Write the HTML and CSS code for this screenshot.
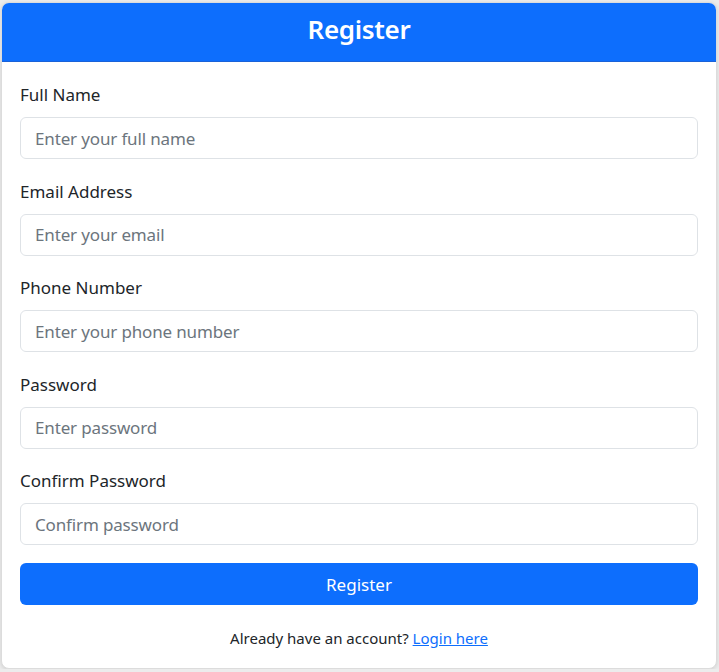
FILE: index.html
```html
<!DOCTYPE html>
<html lang="en">

<head>
    <meta charset="UTF-8">
    <meta name="viewport" content="width=device-width, initial-scale=1.0">
    <title>Register</title>
    <link rel="stylesheet" href="styles.css">
</head>

<body>

    <div class="card">
        <div class="card-header">
            <h2>Register</h2>
        </div>

        <div class="card-body">
            <form id="registerForm">
                <div class="field">
                    <label for="fullname">Full Name</label>
                    <input type="text" id="fullname" name="fullname" placeholder="Enter your full name">
                </div>

                <div class="field">
                    <label for="email">Email Address</label>
                    <input type="email" id="email" name="email" placeholder="Enter your email">
                </div>

                <div class="field">
                    <label for="phone">Phone Number</label>
                    <input type="tel" id="phone" name="phone" placeholder="Enter your phone number">
                </div>

                <div class="field">
                    <label for="password">Password</label>
                    <input type="password" id="password" name="password" placeholder="Enter password">
                </div>

                <div class="field">
                    <label for="confirm">Confirm Password</label>
                    <input type="password" id="confirm" name="confirm" placeholder="Confirm password">
                </div>

                <button type="submit" class="btn-register">Register</button>
            </form>

            <p class="login-link">Already have an account? <a href="#">Login here</a></p>
        </div>
    </div>

</body>

</html>
```

FILE: styles.css
```css
body {
    margin: 0;
    padding: 2px 2px 0 1px;
    font-family: 'Noto Sans', 'Open Sans', sans-serif;
    background-color: #ececec;
    color: #212529;
}

.card {
    background-color: #fff;
    border: 1px solid #dcdcdc;
    border-radius: 8px;
    box-shadow: 0 1px 4px rgba(0, 0, 0, 0.12);
    overflow: hidden;
}

.card-header {
    background-color: #0d6efd;
    color: #fff;
    height: 59px;
    padding-bottom: 7px;
    box-sizing: border-box;
    display: flex;
    align-items: center;
    justify-content: center;
    border-bottom: 1px solid #1a62d8;
}

.card-header h2 {
    margin: 0;
    font-size: 26px;
    font-weight: 600;
    letter-spacing: -0.3px;
}

.card-body {
    padding: 20px 18px 17px;
}

.field {
    margin-bottom: 19.5px;
}

.field label {
    display: block;
    font-size: 17px;
    line-height: 26px;
    margin-bottom: 9px;
}

.field input {
    display: block;
    box-sizing: border-box;
    width: 100%;
    height: 42px;
    padding: 0 14px;
    font-family: inherit;
    font-size: 17px;
    letter-spacing: -0.15px;
    color: #212529;
    border: 1px solid #dee2e6;
    border-radius: 6px;
    outline: none;
}

.field input::placeholder {
    color: #6c757d;
}

.btn-register {
    display: block;
    width: 100%;
    height: 42px;
    margin-top: -1.5px;
    background-color: #0d6efd;
    color: #fff;
    font-family: inherit;
    font-size: 17px;
    border: none;
    border-radius: 6px;
    cursor: pointer;
}

.login-link {
    margin: 20px 0 0;
    text-align: center;
    font-size: 15px;
    line-height: 26px;
}

.login-link a {
    color: #0d6efd;
}
```
